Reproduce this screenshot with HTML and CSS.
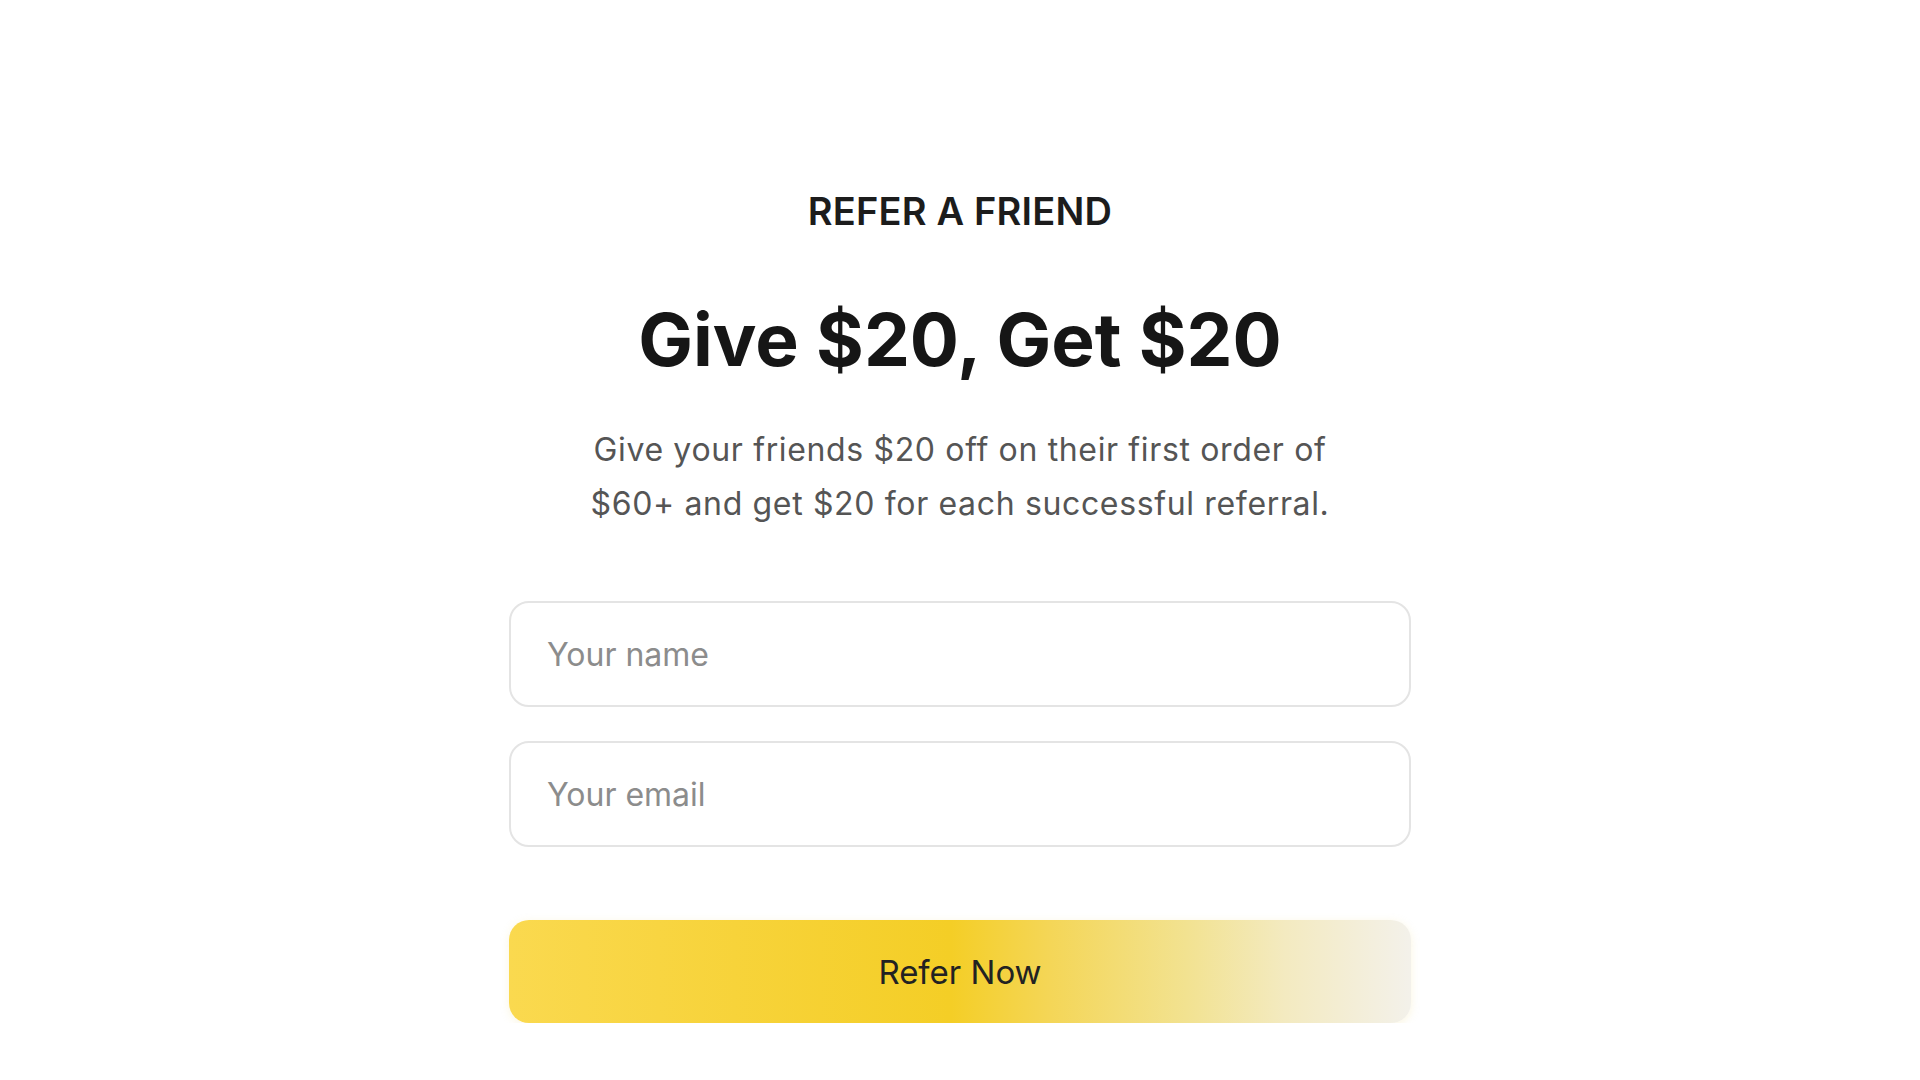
FILE: index.html
```html
<!DOCTYPE html>
<html lang="en">
<head>
<meta charset="utf-8">
<title>Refer a Friend</title>
<link rel="stylesheet" href="styles.css">
</head>
<body>
<main class="refer">
  <p class="eyebrow">REFER A FRIEND</p>
  <h1 class="title">Give $20, Get $20</h1>
  <p class="lead">Give your friends $20 off on their first order of<br>$60+ and get $20 for each successful referral.</p>
  <form class="form" onsubmit="return false">
    <input class="field" type="text" placeholder="Your name">
    <input class="field" type="email" placeholder="Your email">
    <button class="cta" type="submit">Refer Now</button>
  </form>
</main>
</body>
</html>
```

FILE: styles.css
```css
html, body {
  margin: 0;
  padding: 0;
  background: #ffffff;
}

body {
  font-family: Inter, "Noto Sans", "Liberation Sans", sans-serif;
  color: #1a1a1a;
}

.refer {
  display: flex;
  flex-direction: column;
  align-items: center;
  padding-top: 189px;
}

.eyebrow {
  margin: 0;
  font-size: 38px;
  line-height: 44px;
  font-weight: 600;
  letter-spacing: 0.2px;
  color: #1c1c1c;
}

.title {
  margin: 63px 0 0;
  font-size: 73px;
  line-height: 88px;
  font-weight: 700;
  letter-spacing: 0;
  color: #161616;
}

.lead {
  margin: 39px 0 0;
  font-size: 32px;
  line-height: 54px;
  font-weight: 400;
  letter-spacing: 0.65px;
  color: #555555;
  text-align: center;
}

.form {
  margin-top: 70px;
  width: 902px;
  display: flex;
  flex-direction: column;
}

.field {
  box-sizing: border-box;
  height: 106px;
  width: 100%;
  border: 2px solid #e4e4e4;
  border-radius: 20px;
  padding: 0 36px;
  font-family: inherit;
  font-size: 32px;
  color: #333;
  background: #fff;
  outline: none;
}

.field + .field {
  margin-top: 34px;
}

.field::placeholder {
  color: #8c8c8c;
}

.cta {
  margin-top: 73px;
  box-sizing: border-box;
  height: 103px;
  width: 100%;
  border: none;
  border-radius: 20px;
  font-family: inherit;
  font-size: 33px;
  font-weight: 400;
  color: #222222;
  background: linear-gradient(90deg, #fad94f 0%, #f7d33a 25%, #f4ce26 49%, #f4d657 60%, #f2e290 75%, #f3eac0 86%, #f3f1ea 100%);
  box-shadow: 0 2px 8px rgba(240, 220, 130, 0.25);
  cursor: pointer;
}
```
